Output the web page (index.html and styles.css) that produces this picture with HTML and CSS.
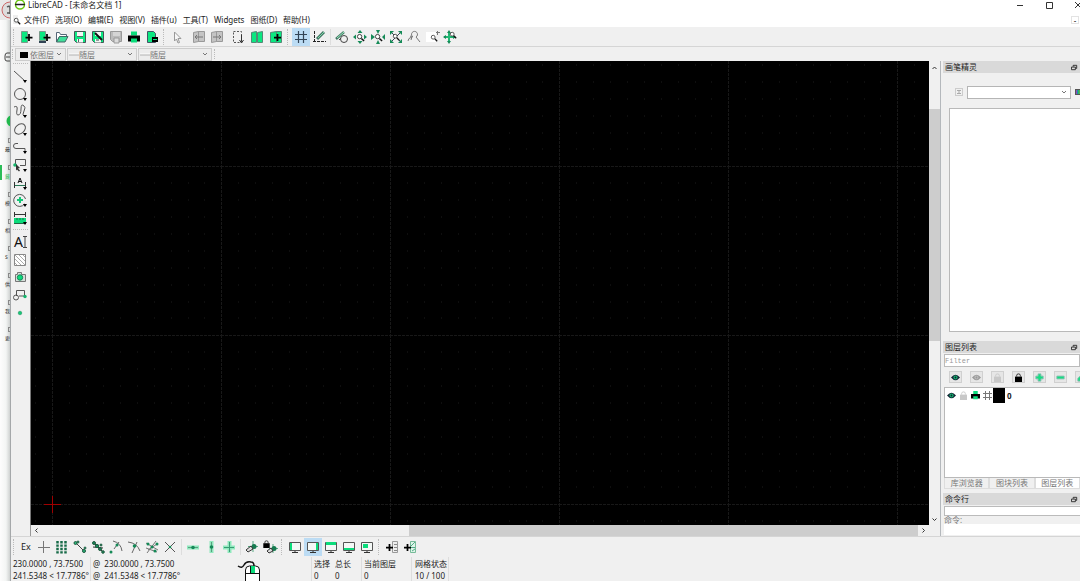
FILE: index.html
```html
<!DOCTYPE html>
<html lang="zh-CN">
<head>
<meta charset="utf-8">
<title>LibreCAD - [未命名文档 1]</title>
<link rel="stylesheet" href="styles.css">
</head>
<body>
<svg class="defs" aria-hidden="true">
  <symbol id="plus" viewBox="0 0 8 8"><path d="M3 0h2v3h3v2H5v3H3V5H0V3h3z"/></symbol>
  <symbol id="tri" viewBox="0 0 4 3"><path d="M0 0h4L2 3z"/></symbol>
  <symbol id="mag" viewBox="0 0 10 10"><circle cx="4" cy="4" r="2.4" fill="#fff" stroke="#333"/><path d="M6 6l3 3" stroke="#111" stroke-width="1.6"/></symbol>
  <symbol id="lock" viewBox="0 0 8 10"><path d="M0 4h8v6H0z"/><path d="M2 4V2.600Q2 1 4 1t2 1.600V4" fill="none" stroke="currentColor"/></symbol>
  <symbol id="eye" viewBox="0 0 10 8"><path d="M0 4Q5-2 10 4 5 10 0 4z"/><circle class="iris" cx="5" cy="4" r="2.300"/><circle cx="5" cy="4" r="1"/></symbol>
  <symbol id="screen" viewBox="0 0 18 18"><path d="M3.500 4.500h11v8h-11z" fill="#f4f8f6" stroke="#555"/><path d="M6 14.500h6M9 13v2" stroke="#333"/></symbol>
  <symbol id="float" viewBox="0 0 8 8"><path d="M2.500 3V1.500h4v3.500H5.500M.5 3.500h4.500v3H.5z" fill="none" stroke="#222"/></symbol>
  <symbol id="printer" viewBox="0 0 12 12"><path d="M3 0h6v4H3z" fill="#0bdc7b"/><path d="M0 4h12v6H0z"/><path d="M3 7h6v4H3z" fill="#0bdc7b"/></symbol>
</svg>
<div class="screen">
  <div class="backdrop">
    <svg class="badge" viewBox="0 0 10 20"><circle cx="10" cy="10" r="8" fill="#ddd" stroke="#c66"/><path d="M7 7q3-2 3 1v6M7 13h3" fill="none" stroke="#555" stroke-width="1.500"/></svg>
    <svg class="tabmark" viewBox="0 0 10 12"><path d="M10 2H7Q5 2 5 5v3q0 2 2 2h3M6 6h4" fill="none" stroke="#444"/></svg>
    <svg class="dot" viewBox="0 0 10 12"><circle cx="12" cy="6" r="5.500" fill="#21b84c"/></svg>
    <ul class="side">
      <li><i></i>最</li><li class="on"><i></i>藏</li><li><i></i>模</li><li><i></i>相</li><li><i></i>S</li><li><i></i>供</li><li><i></i>我</li><li><i></i>更</li>
    </ul>
  </div>
  <div class="window">
    <header class="titlebar">
      <svg class="logo" viewBox="0 0 12 12"><circle cx="6" cy="4.500" r="4.500" fill="none" stroke="#6cc915" stroke-width="1.500"/><path d="M1 4.500h10" stroke="#222" stroke-width="1.500"/></svg>
      <h1>LibreCAD - [未命名文档 1]</h1>
      <div class="winbtns">
        <button aria-label="最小化"><svg viewBox="0 0 10 10"><path d="M2 5.500h6"/></svg></button>
        <button aria-label="最大化"><svg viewBox="0 0 10 10"><path d="M2.500 2.500h6v6h-6z"/></svg></button>
        <button aria-label="关闭"><svg viewBox="0 0 10 10"><path d="M2 2l6 6M8 2l-6 6"/></svg></button>
      </div>
    </header>
    <nav class="menu">
      <svg class="docicon" viewBox="0 0 8 10"><path d="M0 0h5v9H0z" fill="#eee"/><use href="#mag" x="0" y="2" width="8" height="8"/></svg>
      <button>文件(F)</button><button>选项(O)</button><button>编辑(E)</button><button>视图(V)</button><button>插件(u)</button><button>工具(T)</button><button>Widgets</button><button>图纸(D)</button><button>帮助(H)</button>
      <button class="mdi" aria-label="最小化文档">-</button>
    </nav>

    <div class="toolbar">
      <span class="grip"></span>
      <div class="group">
        <button aria-label="新建"><svg viewBox="0 0 18 18"><path d="M4.500 3.500h6v11h-6z" fill="#0be881" stroke="#7a9a8a"/><use href="#plus" x="8" y="6" width="8" height="7"/></svg></button>
        <button aria-label="从模板新建"><svg viewBox="0 0 18 18"><path d="M4.500 3.500h6v9h-6z" fill="#0be881" stroke="#7a9a8a"/><path d="M4 14h7" stroke="#345" stroke-width="2"/><use href="#plus" x="8" y="6" width="8" height="7"/></svg></button>
        <button aria-label="打开"><svg viewBox="0 0 18 18"><path d="M3.500 14V4.500h3l1 2h6v2h-7z" fill="#fff" stroke="#567"/><path d="M3.500 14l3-5.500h8.500l-3 5.500z" fill="#3fe09a" stroke="#466"/></svg></button>
        <button aria-label="保存"><svg viewBox="0 0 18 18"><path d="M3.500 3.500h11v11h-9l-2-2z" fill="#0be881" stroke="#455"/><path d="M6 4h6v4H6zM6 11h6v3.500H6z" fill="#f4f4f4"/><path d="M6 8.500h6M7.500 11v3" stroke="#566"/></svg></button>
        <button aria-label="另存为"><svg viewBox="0 0 18 18"><path d="M3.500 3.500h11v11h-9l-2-2z" fill="#0be881" stroke="#455"/><path d="M6 4h6v4H6zM6 11h6v3.500H6z" fill="#f4f4f4"/><path d="M6 5l7 7" stroke="#111" stroke-width="2"/><path d="M7 12h3" stroke="#344"/></svg></button>
        <button aria-label="全部保存" disabled><svg viewBox="0 0 18 18"><path d="M3.500 3.500h11v10h-9l-2-2z" fill="#bbb" stroke="#999"/><path d="M6 5h7M6 7h7" stroke="#eee"/><path d="M7 10h5v5H7z" fill="#ddd" stroke="#999"/></svg></button>
        <button aria-label="打印"><svg viewBox="0 0 18 18"><use href="#printer" x="3" y="3" width="12" height="13"/></svg></button>
        <button aria-label="打印预览"><svg viewBox="0 0 18 18"><path d="M4.500 3.500h6l2 2v9h-8z" fill="#0be881" stroke="#456"/><path d="M9 9h6v5H9z"/><path d="M10 11.500h4" stroke="#0be881"/></svg></button>
      </div>
      <span class="grip"></span>
      <div class="group">
        <button aria-label="选择"><svg viewBox="0 0 18 18"><path d="M6.500 4v9l2-2 1.500 4 1.500-.5L10 10.500h3z" fill="#f6f6f6" stroke="#999"/></svg></button>
      </div>
      <div class="group">
        <button aria-label="撤销" disabled><svg viewBox="0 0 18 18"><path d="M3.500 4.500l5-1v10l-5 1zM8.500 3.500h6v10h-6z" fill="#c4c4c4" stroke="#999"/><path d="M5 9h8M7 7L5 9l2 2" fill="none" stroke="#777"/></svg></button>
        <button aria-label="重做" disabled><svg viewBox="0 0 18 18"><path d="M3.500 4.500l5-1v10l-5 1zM8.500 3.500h6v10h-6z" fill="#c4c4c4" stroke="#999"/><path d="M5 9h8M11 7l2 2-2 2" fill="none" stroke="#777"/></svg></button>
      </div>
      <div class="group tight">
        <button aria-label="剪切"><svg viewBox="0 0 18 18"><path d="M4.500 3.500h8v11h-8z" fill="none" stroke="#555" stroke-dasharray="2 1.500"/><path d="M12.500 7v6M10.500 12l2 3 2-3" fill="none" stroke="#333"/></svg></button>
        <button aria-label="复制"><svg viewBox="0 0 18 18"><path d="M3.500 4.500l5-1v11h-5zM9.500 4.500l5-1v11h-5z" fill="#0be881" stroke="#587"/></svg></button>
        <button aria-label="粘贴"><svg viewBox="0 0 18 18"><path d="M3.500 4.500l6-1v11h-6zM9.500 3.500h5v11h-5z" fill="#0be881" stroke="#587"/><use href="#plus" x="7" y="6" width="7" height="7"/></svg></button>
      </div>
      <span class="grip"></span>
      <div class="group">
        <button class="active" aria-label="网格"><svg viewBox="0 0 18 18"><path d="M6.500 3v12M11.500 3v12M3 6.500h12M3 11.500h12" stroke="#345" stroke-width="1.200"/></svg></button>
        <button aria-label="草图模式"><svg viewBox="0 0 18 18"><path d="M4.500 3v12M3 13.500h13" stroke="#222" stroke-dasharray="3 1"/><path d="M7 11l7-7" stroke="#476" stroke-width="3"/><path d="M8 10l6-6" stroke="#7ed9a8"/></svg></button>
      </div>
      <span class="rule"></span>
      <div class="group">
        <button aria-label="重画"><svg viewBox="0 0 18 18"><path d="M3 11l8-7" stroke="#476" stroke-width="2.500"/><path d="M4 10l7-6" stroke="#9eb"/><circle cx="11" cy="11" r="3.500" fill="none" stroke="#444"/><path d="M6 12l2-2" stroke="#444"/></svg></button>
        <button aria-label="放大"><svg viewBox="0 0 18 18"><path d="M9 2l2.500 3h-5zM9 16l2.500-3h-5zM2 9l3-2.500v5zM16 9l-3-2.500v5z" fill="#158a57"/><use href="#mag" x="5" y="5" width="9" height="9"/></svg></button>
        <button aria-label="缩小"><svg viewBox="0 0 18 18"><path d="M9 6L7 2h4zM9 12l-2 4h4zM6 9L2 6v6zM13 9l3-3v6z" fill="#158a57"/><use href="#mag" x="5" y="5" width="9" height="9"/></svg></button>
        <button aria-label="自动缩放"><svg viewBox="0 0 18 18"><path d="M4 4l10 10M14 4L4 14" stroke="#345"/><path d="M3 3h4L3 7zM15 3v4l-4-4zM3 15v-4l4 4zM15 15h-4l4-4z" fill="#158a57"/><use href="#mag" x="5" y="5" width="8" height="8"/></svg></button>
        <button aria-label="上一视图"><svg viewBox="0 0 18 18"><path d="M3 13q0-3 4-4M5 8l2 1-1 3M8 9a3 3 0 1 1 3 0l4 5" fill="none" stroke="#777"/></svg></button>
        <button aria-label="窗口缩放"><svg viewBox="0 0 18 18"><path d="M3 4h10v10H3z" fill="#fff"/><path d="M14.500 3v4M13 4.500h4" stroke="#777"/><use href="#mag" x="7" y="6" width="8" height="8"/></svg></button>
        <button aria-label="平移"><svg viewBox="0 0 18 18"><path d="M8 4v10M3 9h11" stroke="#20b873" stroke-width="2"/><path d="M8 2l2 3H6zM8 16l2-3H6zM2 9l3-2v4zM15 9l-3-2v4z" fill="#158a57"/><use href="#mag" x="8" y="3" width="8" height="8"/></svg></button>
      </div>
    </div>

    <div class="pens">
      <span class="grip"></span>
      <label class="pen color"><svg viewBox="0 0 8 6"><path d="M0 0h8v6H0z"/></svg><select aria-label="颜色"><option>依图层</option></select></label>
      <label class="pen"><svg viewBox="0 0 10 6"><path d="M0 2h10v2H0z" fill="#fff"/><path d="M0 3.500h10" stroke="#aaa"/></svg><select aria-label="线宽"><option>随层</option></select></label>
      <label class="pen wide"><svg viewBox="0 0 10 6"><path d="M0 2h10v2H0z" fill="#fff"/><path d="M0 3.500h10" stroke="#aaa"/></svg><select aria-label="线型"><option>随层</option></select></label>
      <span class="grip"></span>
    </div>

    <main class="work">
      <aside class="tools">
        <span class="hgrip"></span>
        <div class="draw">
          <button aria-label="直线"><svg viewBox="0 0 18 18"><path d="M3 4l11 10" stroke="#555"/><use href="#tri" x="12" y="13" width="4" height="3"/></svg></button>
          <button aria-label="圆"><svg viewBox="0 0 18 18"><circle cx="9" cy="9" r="5.500" fill="none" stroke="#555"/><use href="#tri" x="12" y="13" width="4" height="3"/></svg></button>
          <button aria-label="样条"><svg viewBox="0 0 18 18"><path d="M3 5q4-2 3 3t1 5q3 0 3-6t3-3q2 1 0 5t0 5" fill="none" stroke="#555"/><use href="#tri" x="12" y="13" width="4" height="3"/></svg></button>
          <button aria-label="椭圆"><svg viewBox="0 0 18 18"><ellipse cx="9" cy="9" rx="6" ry="4.500" transform="rotate(-40 9 9)" fill="none" stroke="#555"/><use href="#tri" x="12" y="13" width="4" height="3"/></svg></button>
          <button aria-label="多段线"><svg viewBox="0 0 18 18"><path d="M7 5.500H5a2.500 2.500 0 0 0 0 5h9v4" fill="none" stroke="#555"/><use href="#tri" x="12" y="13" width="4" height="3"/></svg></button>
          <button aria-label="选择工具"><svg viewBox="0 0 18 18"><path d="M4.500 8V3.500h10v6H9" fill="none" stroke="#555"/><circle cx="4" cy="9" r="1.800" fill="#16b56d"/><path d="M5 8l4 4-2 .5 2 2-1 1-2-2-1 1z" fill="#333"/><use href="#tri" x="12" y="13" width="4" height="3"/></svg></button>
          <button aria-label="标注"><svg viewBox="0 0 18 18"><path d="M3.500 8v6M14.500 8v6" stroke="#333"/><path d="M4 11.500h10" stroke="#287755"/><path d="M7 9l2-5 2 5M8 7.500h2" fill="none" stroke="#111"/><use href="#tri" x="12" y="13" width="4" height="3"/></svg></button>
          <button aria-label="修改"><svg viewBox="0 0 18 18"><path d="M13.500 13a6 6 0 1 1 1-5" fill="none" stroke="#555"/><path d="M9 6v6M6 9h6" stroke="#16c878" stroke-width="2"/><use href="#tri" x="12" y="13" width="4" height="3"/></svg></button>
          <button aria-label="测量"><svg viewBox="0 0 18 18"><path d="M3.500 3v5M14.500 3v5M4 5.500h10" stroke="#333"/><path d="M3 9h12v5H3z" fill="#0bdc7b"/><path d="M3 14.500h12M6 9v2M9 9v2M12 9v2" stroke="#264"/><use href="#tri" x="12" y="13" width="4" height="3"/></svg></button>
        </div>
        <span class="hgrip"></span>
        <div class="draw extra">
          <button class="letter" aria-label="多行文字">A<svg viewBox="0 0 4 12"><path d="M0 .5h4M0 11.500h4M2 1v10" stroke="#444"/></svg></button>
          <button aria-label="填充"><svg viewBox="0 0 18 18"><path d="M3.500 3.500h11v11h-11z" fill="#fff" stroke="#888"/><path d="M4 8l6 6M4 4l10 10M8 4l6 6M4 12l2 2M12 4l2 2" stroke="#aaa"/></svg></button>
          <button aria-label="图像"><svg viewBox="0 0 18 18"><path d="M4.500 5.500h2v-2h4v2h4v7h-10z" fill="#d6dfda" stroke="#777"/><circle cx="9" cy="8.500" r="2.700" fill="#0bdc7b" stroke="#16845a"/></svg></button>
          <button aria-label="块"><svg viewBox="0 0 18 18"><path d="M5.500 10V4.500h8V10H8" fill="none" stroke="#555"/><circle cx="5" cy="11.500" r="2.500" fill="none" stroke="#555"/><circle cx="14" cy="10.500" r="1.700" fill="#16b56d"/></svg></button>
          <button aria-label="点"><svg viewBox="0 0 18 18"><circle cx="9" cy="9" r="1.800" fill="#16c878" stroke="#158a57" stroke-width=".5"/></svg></button>
        </div>
      </aside>

      <section class="view">
        <svg class="canvas" role="img" aria-label="绘图区">
          <defs>
            <pattern id="minor" x="21" y="105" width="169" height="169" patternUnits="userSpaceOnUse">
              <path id="dots" d="M17 17h1M34 17h1M51 17h1M68 17h1M85 17h1M102 17h1M119 17h1M136 17h1M152 17h1" stroke="#1c1c1c"/>
              <use href="#dots" y="17"/><use href="#dots" y="34"/><use href="#dots" y="51"/><use href="#dots" y="68"/><use href="#dots" y="85"/><use href="#dots" y="102"/><use href="#dots" y="119"/><use href="#dots" y="135"/>
            </pattern>
            <pattern id="major" x="21" y="105" width="169" height="169" patternUnits="userSpaceOnUse"><path d="M.5 0v169M0 .5h169" stroke="#181818" stroke-dasharray="3 1"/></pattern>
          </defs>
          <rect width="100%" height="100%" fill="#000"/>
          <rect width="100%" height="100%" fill="url(#minor)"/>
          <rect width="100%" height="100%" fill="url(#major)"/>
          <path d="M13 443.500h17M21.500 435v17" stroke="#a00000"/>
        </svg>
        <div class="vscroll"><svg viewBox="0 0 7 7"><path d="M1.500 5l2-2 2 2"/></svg><div class="track"><span></span></div><svg viewBox="0 0 7 7"><path d="M1.500 2.500l2 2 2-2"/></svg></div>
        <div class="hscroll"><svg viewBox="0 0 7 7"><path d="M4.500 1.500l-2 2 2 2"/></svg><div class="track"><span></span></div><svg viewBox="0 0 7 7"><path d="M2.500 1.500l2 2-2 2"/></svg></div>
      </section>

      <aside class="dock">
        <h2>画笔精灵<button aria-label="浮动"><svg viewBox="0 0 8 8"><use href="#float"/></svg></button></h2>
        <div class="wizard">
          <button class="mini" aria-label="添加颜色"><svg viewBox="0 0 6 6"><path d="M1 1.500h4M1 4.500h4M3 1v4" stroke="#aaa"/></svg></button>
          <select aria-label="画笔颜色"><option></option></select>
          <button class="palette" aria-label="调色板"></button>
        </div>
        <div class="colors"></div>
        <h2>图层列表<button aria-label="浮动"><svg viewBox="0 0 8 8"><use href="#float"/></svg></button></h2>
        <input class="filter" type="text" placeholder="Filter" aria-label="过滤">
        <div class="layerbtns">
          <button aria-label="显示全部"><svg class="seen" viewBox="0 0 10 8"><use href="#eye"/></svg></button>
          <button aria-label="隐藏全部"><svg class="unseen" viewBox="0 0 10 8"><use href="#eye"/></svg></button>
          <button aria-label="解锁全部"><svg class="pale" viewBox="0 0 8 10"><use href="#lock"/></svg></button>
          <button aria-label="锁定全部"><svg viewBox="0 0 8 10"><use href="#lock"/></svg></button>
          <button aria-label="添加图层"><svg class="green" viewBox="0 0 10 10"><path d="M3.500 1h3v2.500H9v3H6.500V9h-3V6.500H1v-3h2.500z"/></svg></button>
          <button aria-label="删除图层"><svg class="green" viewBox="0 0 10 10"><path d="M1 3.500h8v3H1z"/></svg></button>
          <button aria-label="编辑图层"><svg class="green" viewBox="0 0 10 10"><path d="M1 9V6l5-5 3 3-5 5z"/></svg></button>
        </div>
        <div class="layers">
          <table>
            <tr>
              <td><svg class="seen" viewBox="0 0 10 8"><use href="#eye"/></svg></td>
              <td><svg class="pale" viewBox="0 0 8 10"><use href="#lock"/></svg></td>
              <td><svg viewBox="0 0 12 12"><use href="#printer"/></svg></td>
              <td><svg viewBox="0 0 9 9"><path d="M2.500 0v9M6.500 0v9M0 2.500h9M0 6.500h9" stroke="#777"/></svg></td>
              <td class="swatch"></td>
              <td class="name">0</td>
            </tr>
          </table>
        </div>
        <div class="tabs"><button>库浏览器</button><button>图块列表</button><button class="current">图层列表</button></div>
        <h2>命令行<button aria-label="浮动"><svg viewBox="0 0 8 8"><use href="#float"/></svg></button></h2>
        <div class="log"></div>
        <label class="cmdlabel" for="cmd">命令:</label>
        <input class="cmd" id="cmd" type="text">
      </aside>
    </main>

    <div class="toolbar snaps">
      <span class="grip"></span>
      <div class="group">
        <button class="ex">Ex</button>
        <button aria-label="自由捕捉"><svg viewBox="0 0 18 18"><path d="M8.500 3v12M3 9.500h12" stroke="#777"/></svg></button>
        <button aria-label="捕捉网格"><svg viewBox="0 0 18 18"><path d="M4.500 3v13M8.500 3v13M12.500 3v13" stroke="#176b48" stroke-width="2.500" stroke-dasharray="2.400 1"/></svg></button>
        <button aria-label="捕捉端点"><svg viewBox="0 0 18 18"><path d="M5 5l8 8" stroke="#444"/><g fill="#26b878" stroke="#235b42"><circle cx="4.500" cy="5" r="1.500"/><circle cx="7" cy="4" r="1"/><circle cx="13" cy="13" r="1.500"/><circle cx="14" cy="10" r="1"/></g></svg></button>
        <button aria-label="捕捉实体"><svg viewBox="0 0 18 18"><path d="M4 4l10 10M4 9l10 1" stroke="#333"/><g fill="#158a57" stroke="#235b42"><circle cx="5" cy="5" r="1.500"/><circle cx="8" cy="8" r="1.700"/><circle cx="11" cy="11" r="1.500"/><circle cx="14" cy="14" r="1.300"/><circle cx="12" cy="7" r="1"/></g></svg></button>
        <button aria-label="捕捉圆心"><svg viewBox="0 0 18 18"><path d="M6 3q8 2 9 10M7 11l5-7" fill="none" stroke="#666"/><circle cx="10" cy="7" r="1.500" fill="#158a57"/><circle cx="4" cy="14" r="1.500" fill="#158a57"/></svg></button>
        <button aria-label="捕捉中点"><svg viewBox="0 0 18 18"><path d="M3 4q9 1 12 9M7 15l5-11" fill="none" stroke="#666"/><circle cx="9.500" cy="8" r="1.800" fill="#158a57"/></svg></button>
        <button aria-label="捕捉距离"><svg viewBox="0 0 18 18"><path d="M3 5l12 7M4 15l9-12M3 10l11 4M5 12l9-6" stroke="#777"/><g fill="#158a57"><circle cx="5" cy="6" r="1.500"/><circle cx="9" cy="9" r="1.500"/><circle cx="14" cy="6" r="1.500"/><circle cx="12" cy="13" r="1.500"/></g></svg></button>
        <button aria-label="捕捉交点"><svg viewBox="0 0 18 18"><path d="M4 4l10 10M14 4L4 14" stroke="#555"/><circle cx="9" cy="9" r="1.300" fill="#158a57"/></svg></button>
      </div>
      <span class="rule"></span>
      <div class="group">
        <button aria-label="水平限制"><svg viewBox="0 0 18 18"><path d="M3 9.500h12" stroke="#8fe9bd" stroke-width="4"/><path d="M4 9.500h10" stroke="#5a9c80"/><circle cx="9" cy="9.500" r="1.800" fill="#158a57"/></svg></button>
        <button aria-label="垂直限制"><svg viewBox="0 0 18 18"><path d="M9.500 3v12" stroke="#8fe9bd" stroke-width="4"/><path d="M9.500 4v10" stroke="#5a9c80"/><circle cx="9.500" cy="9" r="1.800" fill="#158a57"/></svg></button>
        <button aria-label="正交限制"><svg viewBox="0 0 18 18"><path d="M3 9.500h12M9.500 3v12" stroke="#8fe9bd" stroke-width="4"/><path d="M4 9.500h10M9.500 4v10" stroke="#3a9c75"/></svg></button>
      </div>
      <span class="rule"></span>
      <div class="group">
        <button aria-label="相对零点"><svg viewBox="0 0 18 18"><path d="M10 3v11M5 8.500h10" stroke="#58a984"/><circle cx="11" cy="8.500" r="2.500" fill="#167b50"/><path d="M3 12l5-4 2 3-5 3z" fill="#ddd" stroke="#333"/></svg></button>
        <button aria-label="锁定相对零点"><svg viewBox="0 0 18 18"><use href="#lock" x="2" y="2" width="7" height="8"/><path d="M12 6v9M8 10.500h9" stroke="#58a984"/><circle cx="13" cy="10.500" r="2.500" fill="#167b50"/><path d="M6 13l4-3 2 3-4 2z" fill="#ddd" stroke="#333"/></svg></button>
      </div>
      <span class="grip"></span>
      <div class="group">
        <button aria-label="左停靠"><svg viewBox="0 0 18 18"><use href="#screen"/><path d="M4 5h2v7H4z" fill="#0bdc7b"/></svg></button>
        <button class="active" aria-label="右停靠"><svg viewBox="0 0 18 18"><use href="#screen"/><path d="M12 5h2v7h-2z" fill="#0bdc7b"/></svg></button>
        <button aria-label="上停靠"><svg viewBox="0 0 18 18"><use href="#screen"/><path d="M4 4h10v3H4z" fill="#0bdc7b"/></svg></button>
        <button aria-label="下停靠"><svg viewBox="0 0 18 18"><use href="#screen"/><path d="M4 10h10v2H4z" fill="#0bdc7b"/></svg></button>
        <button aria-label="浮动停靠"><svg viewBox="0 0 18 18"><use href="#screen"/><path d="M5 6h5v4H5z" fill="#0bdc7b"/></svg></button>
      </div>
      <span class="grip"></span>
      <div class="group">
        <button aria-label="添加菜单"><svg viewBox="0 0 18 18"><path d="M9.500 3.500h5v11h-5z" fill="#eee" stroke="#999"/><path d="M11 6.500h3M11 9.500h3M11 12.500h3" stroke="#888"/><use href="#plus" x="3" y="6" width="7" height="7"/></svg></button>
        <button aria-label="添加工具栏"><svg viewBox="0 0 18 18"><path d="M9.500 3.500h5v11h-5z" fill="#dff5e9" stroke="#7b9"/><path d="M10 8l4-4M10 9.500h4M11 13l3-2" stroke="#5a8"/><use href="#plus" x="3" y="6" width="7" height="7"/></svg></button>
      </div>
    </div>

    <footer class="status">
      <div class="coord"><span>230.0000 , 73.7500</span><span>241.5348 &lt; 17.7786°</span></div>
      <div class="coord second"><span>@&nbsp; 230.0000 , 73.7500</span><span>@&nbsp; 241.5348 &lt; 17.7786°</span></div>
      <svg class="mouse" viewBox="0 0 26 24"><path d="M1 7q4 3 6-1t7-3q3 0 3 4" fill="none" stroke="#111" stroke-width="1.500"/><path d="M8.500 24V11q0-4 4-4h6q4 0 4 4v13" fill="#fff" stroke="#111"/><path d="M9 14.500h13M13.500 7v7M17.500 7v7" stroke="#111"/><path d="M14 7h4v7h-4z" fill="#0bdc7b"/></svg>
      <dl><div><dt>选择</dt><dd>0</dd></div><div><dt>总长</dt><dd>0</dd></div></dl>
      <dl><div><dt>当前图层</dt><dd>0</dd></div></dl>
      <dl class="last"><div><dt>网格状态</dt><dd>10 / 100</dd></div></dl>
    </footer>
  </div>
</div>
</body>
</html>
```
FILE: styles.css
```css
* { box-sizing: border-box; }
body {
  margin: 0;
  font: 8px/12px "Noto Sans", "Noto Sans CJK SC", sans-serif;
  color: #222;
  background: #f0f0f0;
}
button, select, input {
  font: inherit;
  color: inherit;
  margin: 0;
  padding: 0;
  border: 0;
  border-radius: 0;
  background: none;
}
svg { display: block; flex: none; }
h1, h2, dl, dd, ul { margin: 0; padding: 0; font-weight: 400; font-size: 8px; }
.defs { position: absolute; width: 0; height: 0; }
.screen { display: flex; height: 100vh; overflow: hidden; }

/* window lying behind the application */
.backdrop {
  flex: none;
  width: 10px;
  background: linear-gradient(90deg, #fdfdfd, #f3f5f4 60%, #cfd2d1);
}
.badge { width: 10px; height: 20px; background: #e9e9e9; }
.tabmark { width: 10px; height: 12px; margin-top: 31px; }
.dot { width: 10px; height: 12px; margin-top: 52px; }
.side { list-style: none; font-size: 5px; line-height: 8px; margin-top: 11px; }
.side li { height: 27px; padding-left: 5px; color: #333; }
.side i { display: block; width: 2px; height: 5px; margin: 0 0 2px 3px; border: 1px solid #888; border-right: 0; }
.side .on { color: #2cbd58; border-left: 2px solid #2cbd58; padding-left: 3px; height: 15px; margin-bottom: 12px; }

.window {
  flex: 1;
  min-width: 0;
  display: flex;
  flex-direction: column;
  border-left: 1px solid #a5a8aa;
  background: #f0f0f0;
}
.titlebar { display: flex; height: 13px; flex: none; overflow: hidden; background: #fff; padding-left: 3px; }
.logo { width: 12px; height: 12px; }
.titlebar h1 { margin-left: 2px; line-height: 10px; }
.winbtns { display: flex; margin-left: auto; margin-right: -12px; }
.winbtns button { width: 29px; height: 10px; display: flex; justify-content: center; }
.winbtns svg { width: 10px; height: 10px; fill: none; stroke: #333; }
.menu { display: flex; align-items: center; gap: 6px; height: 14px; flex: none; background: #fff; padding-left: 2px; }
.docicon { width: 8px; height: 10px; margin-right: -3px; }
.menu button { line-height: 14px; }
.menu .mdi { margin-left: auto; width: 8px; height: 8px; line-height: 5px; border: 1px solid #e3e3e3; margin-right: 1px; }

.toolbar { display: flex; flex: none; align-items: center; height: 20px; padding-left: 1px; border-bottom: 1px solid #d5d5d5; }
.group { display: flex; }
.group button { width: 18px; height: 18px; padding: 0; }
.group svg { width: 18px; height: 18px; }
.group .active { background: #bcdcf4; }
.group .ex { font-size: 9px; }
.grip { flex: none; width: 2px; height: 16px; margin: 0 1px; border-left: 1px dotted #bbb; }
.grip + .group { margin-left: 1px; }
.group + .grip { margin-left: 2px; }
.group + .group { margin-left: 4px; }
.group + .tight { margin-left: 3px; gap: 1px; }
.grip:not(:first-child) + .group { margin-left: 2px; }
.rule { width: 1px; height: 16px; margin: 0 2px; background: #ddd; }

.pens { display: flex; flex: none; align-items: center; height: 14px; gap: 1px; }
.pens .grip { height: 10px; margin-right: 0; }
.pen { position: relative; width: 70px; height: 13px; }
.pen.color { width: 51px; }
.pen.wide { width: 74px; }
.pen svg { position: absolute; left: 2px; top: 3px; width: 10px; height: 7px; }
.pen.color svg { left: 5px; top: 4px; width: 8px; height: 6px; }
select {
  appearance: none;
  border: 1px solid #ccc;
  background: url("data:image/svg+xml,%3Csvg xmlns='http://www.w3.org/2000/svg' viewBox='0 0 6 6'%3E%3Cpath d='M1 2l2 2 2-2' fill='none' stroke='%23777'/%3E%3C/svg%3E") right 3px center / 6px 6px no-repeat;
}
.pen select { width: 100%; height: 13px; padding-left: 11px; line-height: 11px; color: #777; background-color: #ececec; }
.pen.color select { padding-left: 14px; }

.work { flex: 1; min-height: 0; display: flex; border-bottom: 1px solid #d5d5d5; }
.tools { flex: none; width: 19px; display: flex; flex-direction: column; }
.draw { display: flex; flex-direction: column; height: 160px; }
.draw.extra { height: 89px; }
.draw button { flex: 1; min-height: 0; display: flex; align-items: center; }
.draw svg { width: 18px; height: 18px; }
.hgrip { height: 1px; margin: 2px 2px 3px; border-top: 1px dotted #bbb; }
.draw .letter { justify-content: center; font: 14px/18px "Noto Sans", sans-serif; color: #111; }
.draw .letter svg { width: 4px; height: 12px; }

.view {
  flex: 1;
  min-width: 0;
  display: grid;
  grid-template: minmax(0, 1fr) 11px / minmax(0, 1fr) 11px;
  border-right: 1px solid #b4b8bc;
}
.canvas { width: 100%; height: 100%; border-left: 1px solid #777; }
.vscroll, .hscroll { display: flex; align-items: center; background: #f0f0f0; }
.vscroll { flex-direction: column; padding: 3px 0 2px; }
.hscroll { padding: 0 2px; border-left: 1px solid #999; }
.vscroll svg, .hscroll svg { width: 7px; height: 7px; fill: none; stroke: #333; }
.track { flex: 1; display: flex; }
.vscroll .track { width: 11px; flex-direction: column; padding: 38px 0 0; }
.hscroll .track { height: 11px; justify-content: flex-end; padding-right: 2px; }
.track span { background: #cdcdcd; }
.vscroll span { height: 57%; }
.hscroll span { width: 58%; }

.dock { flex: none; width: 139px; padding-left: 3px; display: flex; flex-direction: column; overflow: hidden; }
.dock h2 { flex: none; display: flex; align-items: center; justify-content: space-between; height: 12px; margin-left: -1px; padding: 0 2px; background: #d9d9d9; }
.dock h2 svg { width: 7px; height: 7px; }
.wizard { display: flex; align-items: center; gap: 4px; height: 35px; flex: none; padding: 3px 0 0 11px; }
.mini { width: 8px; height: 8px; border: 1px solid #ccc; flex: none; }
.mini svg { width: 6px; height: 6px; }
.wizard select { flex: none; width: 104px; height: 13px; background-color: #fff; border-color: #b5b5b5; }
.palette { flex: none; width: 8px; height: 6px; border: 1px solid #555; background: linear-gradient(90deg, #d3a, #27c 20%, #2b6 40%, #e82); }
.colors { flex: 1; min-height: 0; margin: 0 0 9px 5px; background: #fff; border: 1px solid #b9b9b9; border-right: 0; }
.filter { flex: none; height: 13px; margin-top: 1px; padding: 0; background: #fff; border: 1px solid #bbb; font: 7px/11px "Liberation Mono", monospace; }
.filter::placeholder { color: #999; opacity: 1; }
.layerbtns { display: flex; gap: 8px; flex: none; padding: 4px 0 4px 5px; }
.layerbtns button { flex: none; width: 13px; height: 12px; border: 1px solid #d0d0d0; background: #e6e6e6; display: flex; align-items: center; justify-content: center; }
.layerbtns svg, .layers svg { width: 9px; height: 9px; margin: auto; }
.seen { fill: #123; --iris: #12b56d; }
.iris { fill: var(--iris, #bbb); }
.unseen { fill: #999; }
.pale { fill: #c8c8c8; color: #c8c8c8; }
.green { fill: #13df80; stroke: #7ba; stroke-width: 1px; }
.layers { flex: none; height: 91px; background: #fff; border: 1px solid #b9b9b9; border-right: 0; }
.layers table { border-collapse: collapse; width: 100%; }
.layers td { width: 12px; height: 15px; padding: 0; }
.layers .swatch { background: #000; }
.layers .name { width: auto; padding-left: 2px; font-weight: 700; }
.tabs { display: flex; flex: none; height: 11px; margin-bottom: 4px; }
.tabs button { flex: 1; line-height: 10px; color: #777; border: 1px solid #ddd; border-top: 0; }
.tabs .current { background: #fff; }
.log { flex: none; height: 10px; margin-top: 1px; background: #fff; border: 1px solid #bbb; border-right: 0; }
.cmdlabel { flex: none; line-height: 8px; color: #777; }
.cmd { flex: none; height: 11px; background: #fff; margin-bottom: 1px; }

.snaps { border-bottom: 0; }
.status { display: flex; flex: none; height: 24px; overflow: hidden; padding-left: 2px; white-space: nowrap; }
.coord { display: flex; flex-direction: column; width: 78px; border-right: 1px solid #ddd; padding-top: 1px; }
.coord.second { width: 146px; padding-left: 2px; border: 0; }
.mouse { width: 26px; height: 24px; margin: 2px 48px 0 0; }
.status dl { display: flex; gap: 5px; width: 50px; padding: 1px 0 0 2px; border-left: 1px solid #ddd; }
.status .last { width: 38px; padding-left: 3px; border-right: 1px solid #ddd; }
```
